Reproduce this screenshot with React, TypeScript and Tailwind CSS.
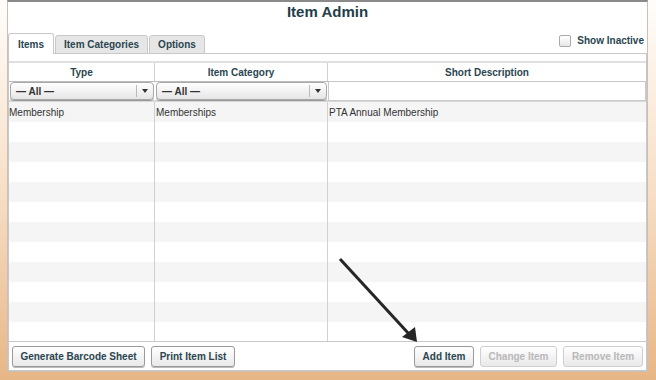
import React from "react";

const font = { fontFamily: '"Liberation Sans", Arial, sans-serif' };

function Select() {
  return (
    <div className="mx-[1px] h-[18px] flex items-center rounded-[4px] border border-[#a9a9a9] bg-gradient-to-b from-white to-[#e6e6e6] text-[10px] font-bold text-[#333] shadow-[0_1px_0_#999]">
      <span className="flex-1 pl-[5px]">— All —</span>
      <span className="h-[12px] w-px bg-[#bbb]" />
      <span className="w-[16px] flex justify-center">
        <svg width="6" height="4" viewBox="0 0 6 4"><path d="M0 0h6L3 4z" fill="#333" /></svg>
      </span>
    </div>
  );
}

function Btn({ label, disabled, w }: { label: string; disabled?: boolean; w: string }) {
  return (
    <div
      className={`${w} h-[21px] flex items-center justify-center rounded-[3px] border text-[10px] font-bold bg-gradient-to-b from-white to-[#e9e9e9] ${
        disabled ? "border-[#cfcfcf] text-[#b8b8b8]" : "border-[#9a9a9a] text-[#2a4550] shadow-[0_1px_0_#bbb]"
      }`}
    >
      {label}
    </div>
  );
}

export default function App() {
  const rows = Array.from({ length: 12 }, (_, i) => i);
  return (
    <div style={font} className="relative w-[656px] h-[380px] overflow-hidden bg-gradient-to-b from-[#fffdfb] via-[#f7dfc6] to-[#e7b686]">
      <div className="ml-[7px] w-[641px] h-[372px] bg-white border-x border-b border-[#c9c0b8] border-t-2 border-t-[#8a8a8a] flex flex-col">
        <div className="h-[21px] flex items-center justify-center text-[15px] font-bold text-[#1f3e48]">Item Admin</div>
        <div className="flex items-end justify-between h-[30px]">
          <div className="flex items-end gap-[1px] relative top-[1px]">
            <div className="h-[21px] w-[46px] bg-white border border-b-0 border-[#c8c8c8] rounded-t-[3px] flex items-center justify-center text-[10px] font-bold text-[#2a4550]">Items</div>
            <div className="h-[19px] w-[93px] bg-[#e6e6e6] border border-[#c8c8c8] rounded-t-[3px] flex items-center justify-center text-[10px] font-bold text-[#2a4550]">Item Categories</div>
            <div className="h-[19px] w-[56px] bg-[#e6e6e6] border border-[#c8c8c8] rounded-t-[3px] flex items-center justify-center text-[10px] font-bold text-[#2a4550]">Options</div>
          </div>
          <div className="self-start flex items-center gap-[6px] pr-[3px] pt-[10px]">
            <span className="w-[12px] h-[12px] border border-[#aaa] rounded-[2px] bg-gradient-to-b from-white to-[#e8e8e8]" />
            <span className="text-[10px] font-bold text-[#2a4550]">Show Inactive</span>
          </div>
        </div>
        <div className="flex-1 border border-[#c8c8c8] bg-white flex flex-col pt-[7px] min-h-0">
          <div className="flex-1 flex flex-col border-t-2 border-[#e0e0e0] min-h-0">
            <div className="flex h-[19px] shrink-0 text-[10px] font-bold text-[#2a4550] border-b border-[#bbb]">
              <div className="w-[146px] flex items-center justify-center border-r border-[#d0d0d0]">Type</div>
              <div className="w-[173px] flex items-center justify-center border-r border-[#d0d0d0]">Item Category</div>
              <div className="flex-1 flex items-center justify-center">Short Description</div>
            </div>
            <div className="flex h-[20px] shrink-0 items-center border-b-2 border-[#d8d8d8]">
              <div className="w-[146px]"><Select /></div>
              <div className="w-[173px]"><Select /></div>
              <div className="flex-1 h-[20px] border border-[#c8c8c8] bg-white" />
            </div>
            <div className="flex-1 flex min-h-0 overflow-hidden">
              <div className="flex-1 flex flex-col">
                {rows.map((i) => (
                  <div key={i} className={`flex h-[20px] shrink-0 text-[10px] text-[#333] ${i % 2 === 0 ? "bg-[#f5f5f5]" : "bg-white"}`}>
                    <div className="w-[146px] border-r border-[#d0d0d0] flex items-center">{i === 0 ? "Membership" : ""}</div>
                    <div className="w-[173px] border-r border-[#d0d0d0] flex items-center pl-[1px]">{i === 0 ? "Memberships" : ""}</div>
                    <div className="flex-1 flex items-center pl-[1px]">{i === 0 ? "PTA Annual Membership" : ""}</div>
                  </div>
                ))}
              </div>
            </div>
          </div>
          <div className="h-[29px] shrink-0 border-t border-[#c8c8c8] flex items-center px-[3px] gap-[6px]">
            <Btn label="Generate Barcode Sheet" w="w-[133px]" />
            <Btn label="Print Item List" w="w-[84px]" />
            <div className="flex-1" />
            <Btn label="Add Item" w="w-[60px]" />
            <Btn label="Change Item" w="w-[77px]" disabled />
            <Btn label="Remove Item" w="w-[80px]" disabled />
          </div>
        </div>
      </div>
      <svg className="absolute left-0 top-0 pointer-events-none" width="656" height="380">
        <line x1="340" y1="259" x2="409" y2="334" stroke="#262626" strokeWidth="3" />
        <path d="M417 342 L402 337 L415 327 Z" fill="#262626" />
      </svg>
    </div>
  );
}
